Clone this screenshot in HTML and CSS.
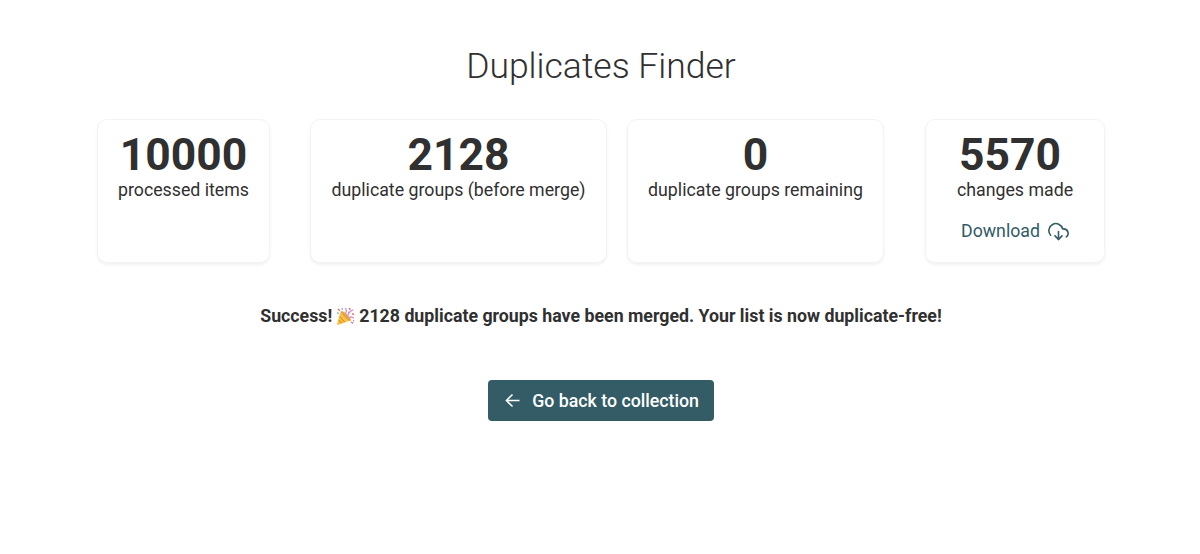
FILE: index.html
```html
<!DOCTYPE html>
<html lang="en">
<head>
    <meta charset="UTF-8">
    <meta name="viewport" content="width=device-width, initial-scale=1.0">
    <title>Duplicates Finder</title>
    <link rel="stylesheet" href="styles.css">
</head>
<body>
    <main class="page">
        <h1>Duplicates Finder</h1>

        <div class="stats">
            <div class="card processed">
                <div class="number">10000</div>
                <div class="label">processed items</div>
            </div>
            <div class="card before">
                <div class="number">2128</div>
                <div class="label">duplicate groups (before merge)</div>
            </div>
            <div class="card remaining">
                <div class="number">0</div>
                <div class="label">duplicate groups remaining</div>
            </div>
            <div class="card changes">
                <div class="number">5570</div>
                <div class="label">changes made</div>
                <a class="download" href="#">
                    <span>Download</span>
                    <svg class="cloud" viewBox="0 0 24 24">
                        <polyline points="8 17 12 21 16 17"></polyline>
                        <line x1="12" y1="12" x2="12" y2="21"></line>
                        <path d="M20.88 18.09A5 5 0 0 0 18 9h-1.26A8 8 0 1 0 3 16.29"></path>
                    </svg>
                </a>
            </div>
        </div>

        <p class="message">
            <span>Success!</span>
            <svg class="party" viewBox="0 0 20 20">
                <path d="M5 4 16 14 2 19 1 18z" fill="#f8c545"></path>
                <path d="M4 10 9 16M3 14l3 3" stroke="#dc8f2e" stroke-width="1.2"></path>
                <ellipse cx="10.5" cy="9.5" rx="2" ry="7" transform="rotate(-45 10.5 9.5)" fill="#e6a637"></ellipse>
                <path d="M9 8Q12 5 10 1M12 10Q13 5 18 3M13 12Q16 9 19 12" fill="none" stroke="#dd91bd" stroke-width="1.4"></path>
                <path d="M2 2l2 2M14 1l1 2M17 7l2 1M16 16l2 1" stroke="#e66570" stroke-width="1.4"></path>
                <path d="M6 1l1 2M1 6l2 1M13 6l1-1M18 15l1-1" stroke="#8fa9d6" stroke-width="1.4"></path>
            </svg>
            <span>2128 duplicate groups have been merged. Your list is now duplicate-free!</span>
        </p>

        <button class="button" type="button">
            <svg class="arrow" viewBox="0 0 16 16">
                <path d="M15.5 8H1.5M8 1.5 1.5 8 8 14.5"></path>
            </svg>
            <span>Go back to collection</span>
        </button>
    </main>
</body>
</html>
```

FILE: styles.css
```css
body {
    margin: 0;
    font-family: Roboto, sans-serif;
    font-size: 17.75px;
    color: #303030;
    background-color: white;
}
.page {
    display: flex;
    flex-direction: column;
    align-items: center;
    padding-top: 44px;
    padding-left: 2px;
}
h1 {
    margin: 0 0 31px;
    font-size: 35.5px;
    line-height: 44px;
    font-weight: 300;
}
.stats {
    display: flex;
    width: 1008px;
}
.card {
    box-sizing: border-box;
    height: 144px;
    padding-top: 13px;
    border: 1px solid #f3f3f3;
    border-radius: 10px;
    box-shadow: 0 2px 3px rgba(0, 0, 0, 0.06);
    text-align: center;
    white-space: nowrap;
}
.processed {
    width: 173px;
    margin-right: 40px;
}
.before {
    width: 297px;
    margin-right: 20px;
}
.remaining {
    width: 257px;
    margin-right: 41px;
}
.changes {
    width: 180px;
}
.number {
    font-size: 44.4px;
    line-height: 44px;
    font-weight: 700;
}
.changes .number {
    padding-right: 10px;
}
.label {
    line-height: 26px;
}
.download {
    display: flex;
    justify-content: center;
    align-items: center;
    gap: 8px;
    margin-top: 15px;
    line-height: 26px;
    color: #315b65;
    text-decoration: none;
}
.cloud {
    width: 21px;
    height: 21px;
    fill: none;
    stroke: currentColor;
    stroke-width: 1.8;
    stroke-linecap: round;
    stroke-linejoin: round;
}
.message {
    display: flex;
    align-items: center;
    margin: 40px 0 51px;
    line-height: 26px;
    font-weight: 700;
    white-space: nowrap;
}
.party {
    width: 19px;
    height: 19px;
    margin: 0 4px;
}
.button {
    display: flex;
    align-items: center;
    justify-content: flex-end;
    gap: 12px;
    width: 226px;
    height: 41px;
    padding: 0 15px 0 0;
    border: none;
    border-radius: 4px;
    background-color: #335c66;
    color: white;
    font-family: inherit;
    font-size: 17.75px;
    font-weight: 500;
    cursor: pointer;
}
.arrow {
    width: 15px;
    height: 15px;
    fill: none;
    stroke: currentColor;
    stroke-width: 1.6;
}
```
